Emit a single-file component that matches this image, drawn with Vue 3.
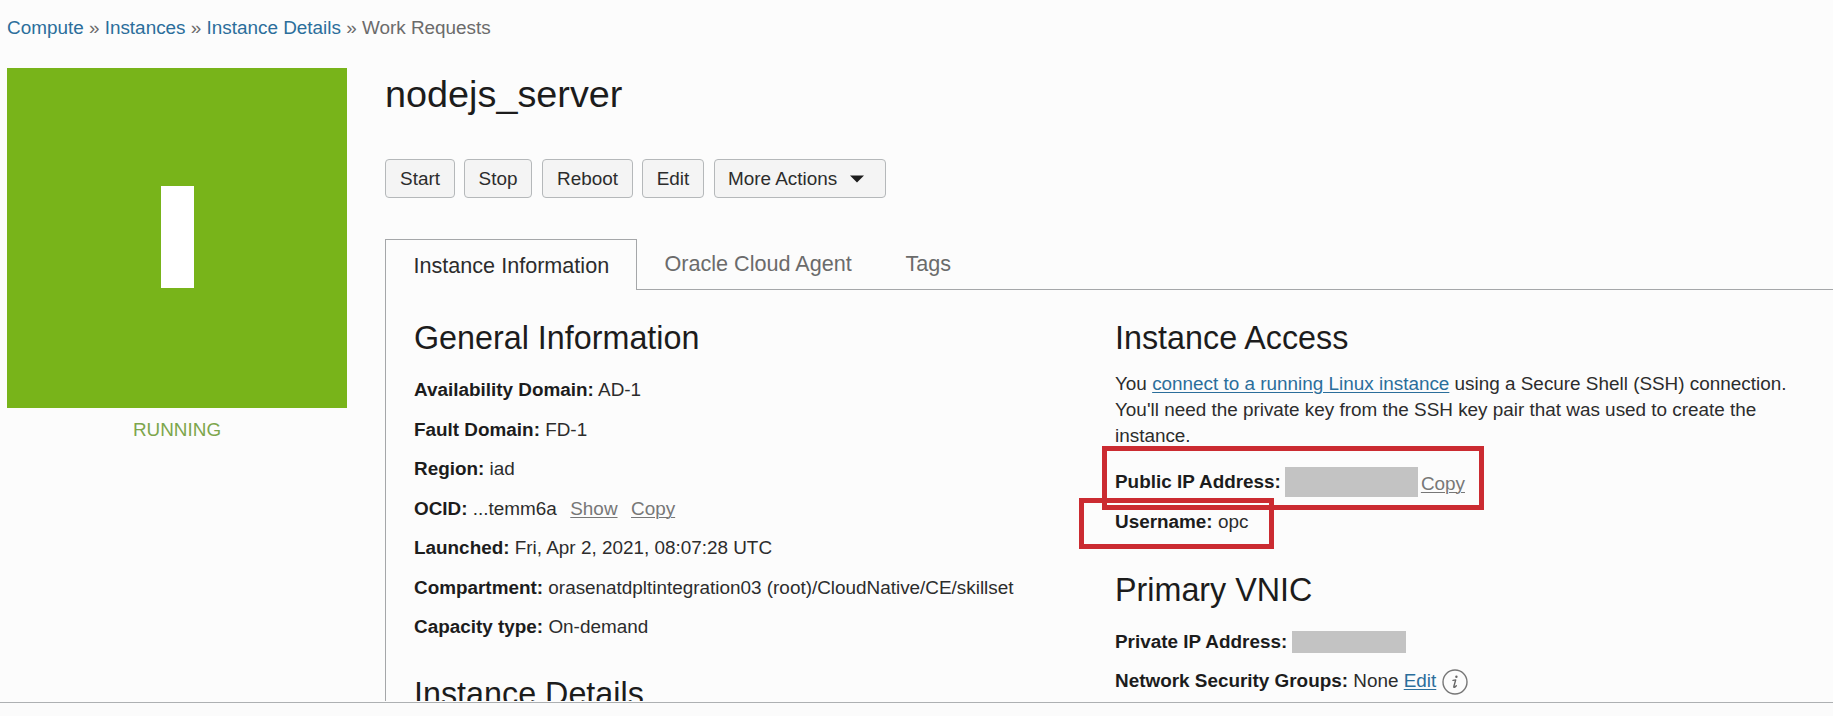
<script setup>
const crumbs = ['Compute', 'Instances', 'Instance Details']
const actions = [
  { label: 'Start', cls: 'start' },
  { label: 'Stop', cls: 'stop' },
  { label: 'Reboot', cls: 'reboot' },
  { label: 'Edit', cls: 'edit' },
]
const general = [
  { label: 'Availability Domain', value: 'AD-1' },
  { label: 'Fault Domain', value: 'FD-1' },
  { label: 'Region', value: 'iad' },
  { label: 'OCID', value: '...temm6a', links: ['Show', 'Copy'] },
  { label: 'Launched', value: 'Fri, Apr 2, 2021, 08:07:28 UTC' },
  { label: 'Compartment', value: 'orasenatdpltintegration03 (root)/CloudNative/CE/skillset' },
  { label: 'Capacity type', value: 'On-demand' },
]
</script>

<template>
  <div class="page">
    <div class="viewport">
      <nav class="crumbs">
        <template v-for="c in crumbs" :key="c"><a>{{ c }}</a> » </template>Work Requests
      </nav>
      <div class="body">
        <aside class="status">
          <div class="tile"><div class="bar"></div></div>
          <div class="state">RUNNING</div>
        </aside>
        <main class="content">
          <h1>nodejs_server</h1>
          <div class="actions">
            <button v-for="a in actions" :key="a.label" :class="a.cls">{{ a.label }}</button>
            <button class="more">
              More Actions
              <svg width="14" height="8" viewBox="0 0 14 8"><path d="M0 .5h14L7 7.5z" fill="#1c1c1c" /></svg>
            </button>
          </div>
          <div class="tabs">
            <div class="tab active">Instance Information</div>
            <div class="tab agent">Oracle Cloud Agent</div>
            <div class="tab tags">Tags</div>
          </div>
          <div class="panel">
            <section class="left">
              <h2>General Information</h2>
              <div class="rows">
                <div v-for="r in general" :key="r.label" class="row">
                  <b>{{ r.label }}:</b> {{ r.value }}<a v-for="l in r.links" :key="l" class="muted">{{ l }}</a>
                </div>
              </div>
              <div class="clip"><h2 class="details">Instance Details</h2></div>
            </section>
            <section class="right">
              <h2>Instance Access</h2>
              <p>You <a>connect to a running Linux instance</a> using a Secure Shell (SSH) connection.<br>You'll need the private key from the SSH key pair that was used to create the<br>instance.</p>
              <div class="line ip">
                <b>Public IP Address:</b><span class="mask wide"></span><a class="muted copy">Copy</a>
                <div class="mark mark-ip"></div>
              </div>
              <div class="line user">
                <b>Username:</b>&nbsp;opc
                <div class="mark mark-user"></div>
              </div>
              <h2 class="vnic">Primary VNIC</h2>
              <div class="line private"><b>Private IP Address:</b><span class="mask narrow"></span></div>
              <div class="line nsg">
                <b>Network Security Groups:</b>&nbsp;None&nbsp;<a>Edit</a>
                <svg class="info" width="26" height="26" viewBox="0 0 26 26">
                  <circle cx="13" cy="13" r="12" fill="none" stroke="#777" stroke-width="1.4" />
                  <circle cx="14.4" cy="7.8" r="1.2" fill="#666" />
                  <path d="M11 11.4 13.7 10.9 11.9 17.2C11.5 18.9 12.7 18.6 14.3 16.7" fill="none" stroke="#666" stroke-width="1.4" stroke-linecap="round" stroke-linejoin="round" />
                </svg>
              </div>
            </section>
          </div>
        </main>
      </div>
    </div>
  </div>
</template>

<style>
body { margin: 0; background: #fcfcfc; }
</style>

<style scoped>
.page {
  height: 716px;
  overflow: hidden;
  background: #fbfbfb;
  color: #2c2c2c;
  font: 18.9px/26px "Liberation Sans", Arial, sans-serif;
  white-space: nowrap;
}
.viewport {
  box-sizing: border-box;
  height: 703px;
  overflow: hidden;
  border-bottom: 1px solid #adb0b2;
  background: #fcfcfc;
}
a { color: #2b6e9b; }
b { color: #1c1c1c; }
.crumbs { height: 68px; padding-left: 7px; box-sizing: border-box; padding-top: 15px; color: #6b6b6b; }
.body { display: flex; gap: 38px; padding-left: 7px; }
.status { width: 340px; flex: none; }
.tile { height: 340px; background: #78b41a; display: flex; align-items: center; justify-content: center; }
.bar { width: 33px; height: 102px; background: #fff; margin-top: -2px; }
.state { margin-top: 9px; text-align: center; color: #7da64c; }
.content { flex: 1; min-width: 0; }
h1 { margin: 6px 0 0; height: 85px; font-weight: 400; font-size: 37.8px; line-height: 40px; color: #1c1c1c; }
.actions { display: flex; height: 39px; }
button {
  box-sizing: border-box;
  height: 39px;
  margin: 0;
  padding: 0;
  border: 1px solid #b5b8ba;
  border-radius: 4px;
  background: #f4f4f4;
  color: #2c2c2c;
  font: inherit;
}
.start { width: 70px; margin-right: 9px; }
.stop { width: 68px; margin-right: 10px; }
.reboot { width: 91px; margin-right: 9px; }
.edit { width: 62px; margin-right: 10px; }
.more { width: 172px; display: flex; align-items: center; gap: 13px; padding-left: 13px; }
.tabs { display: flex; margin-top: 41px; height: 51px; font-size: 21.6px; color: #6b6b6b; }
.tab { box-sizing: border-box; height: 51px; line-height: 50px; border-bottom: 1px solid #a5a7a9; }
.active { width: 252px; padding: 1px 0 0 27.5px; border: 1px solid #a5a7a9; border-bottom: 0; color: #2c2c2c; line-height: 49px; }
.agent { width: 241px; padding-left: 27.5px; }
.tags { flex: 1; padding-left: 27.5px; }
.panel { display: flex; border-left: 1px solid #a5a7a9; height: 411px; overflow: hidden; padding-left: 28px; }
.left { width: 701px; flex: none; }
h2 { margin: 28px 0 0; font-weight: 400; font-size: 32.3px; line-height: 40px; color: #1c1c1c; }
.rows { margin-top: 12px; }
.row { height: 39.5px; line-height: 39.5px; }
.row .muted { margin-left: 13.5px; }
.muted { color: #777; }
.row .muted, p a, .copy, .nsg a { text-decoration: underline; text-decoration-thickness: 1px; text-underline-offset: 2px; }
.clip { height: 55px; overflow: hidden; padding-top: 0; }
.details { margin-top: 27px; }
p { margin: 12.5px 0 0; }
.line { position: relative; display: flex; align-items: center; height: 26px; }
.ip { margin-top: 20.5px; }
.ip b { margin-top: -1px; }
.mask { background: #c3c3c3; }
.wide { width: 133px; height: 30px; margin: 0 3px 0 4px; }
.narrow { width: 114px; height: 22px; margin-left: 5px; }
.copy { margin-top: 3px; }
.user { margin-top: 14px; }
.mark { position: absolute; box-sizing: border-box; border: 5px solid #cb2b31; }
.mark-ip { left: -13px; top: -23px; width: 382px; height: 64px; }
.mark-user { left: -36px; top: -11px; width: 195px; height: 51px; }
.vnic { margin-top: 35px; }
.private { margin-top: 19px; }
.nsg { margin-top: 13px; }
.info { margin-left: 6px; margin-top: 2px; }
</style>
